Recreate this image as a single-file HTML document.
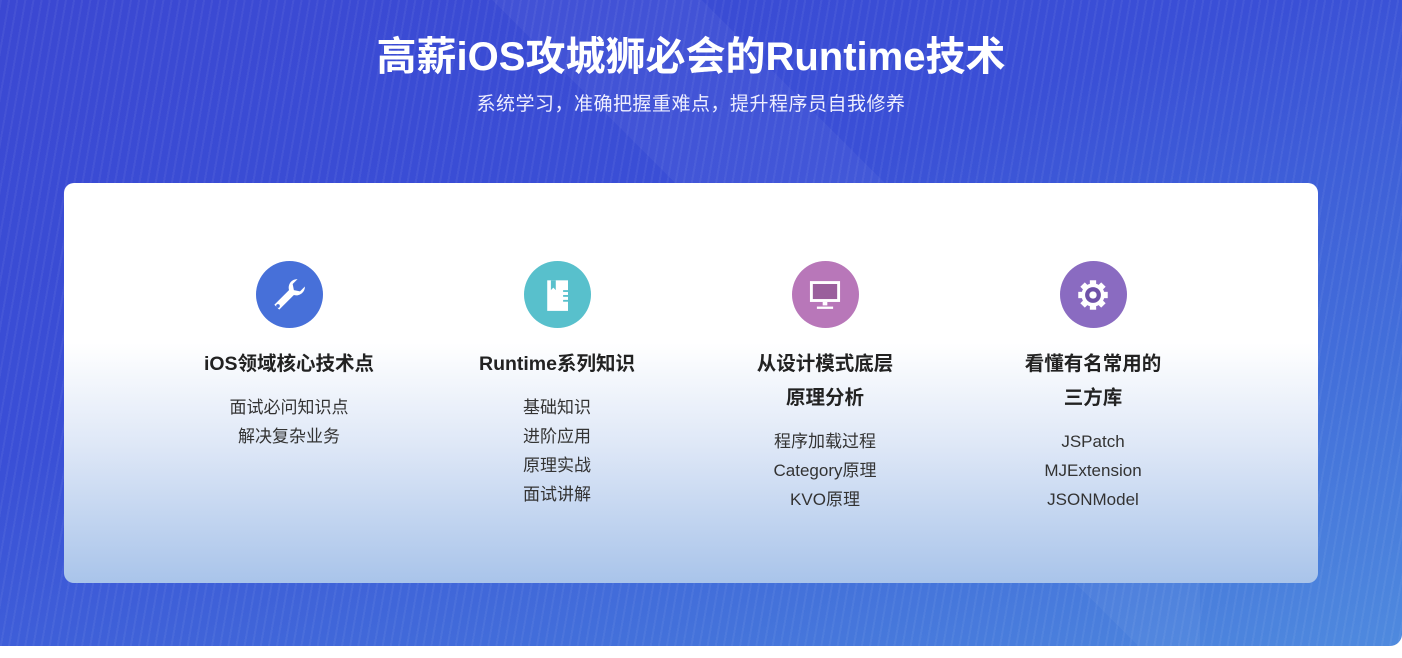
<!DOCTYPE html>
<html><head><meta charset="utf-8"><style>
*{margin:0;padding:0;box-sizing:border-box}
html,body{width:1402px;height:658px;overflow:hidden}
body{background:#fff;font-family:"Liberation Sans","Noto Sans CJK SC",sans-serif;position:relative}
.bg{position:absolute;left:0;top:0;width:1402px;height:646px;border-bottom-right-radius:12px;overflow:hidden;
background:linear-gradient(160deg,#3b48d2 0%,#3a4fd6 40%,#4370da 75%,#4f8ade 100%)}
.stripes{position:absolute;inset:0;background:repeating-linear-gradient(100deg,rgba(255,255,255,0.05) 0 2px,transparent 2px 8px)}
.x1{position:absolute;left:300px;top:-200px;width:900px;height:846px;background:linear-gradient(45deg,transparent 48%,rgba(255,255,255,0.04) 48%,rgba(255,255,255,0.04) 60%,transparent 60%)}
h1{position:absolute;top:34px;left:0;width:1382px;text-align:center;color:#fff;font-size:40px;line-height:46px;font-weight:bold}
.sub{position:absolute;top:92px;left:0;width:1382px;text-align:center;color:#eef;font-size:19px;line-height:26px;letter-spacing:0.5px}
.card{position:absolute;left:64px;top:183px;width:1254px;height:400px;border-radius:10px;
background:linear-gradient(180deg,#fff 0%,#fff 40%,#dfe8f7 65%,#a9c4ea 100%)}
.col{position:absolute;top:78px;width:300px;margin-left:-150px;text-align:center}
.ic{width:67px;height:67px;border-radius:50%;margin:0 auto;display:flex;align-items:center;justify-content:center}
.t{margin-top:19px;font-size:19.5px;font-weight:bold;color:#222;line-height:34px}
.items{margin-top:12px;font-size:17px;color:#333;line-height:29px}
</style></head><body>
<div class="bg"><div class="stripes"></div><div class="x1"></div></div>
<h1>高薪iOS攻城狮必会的Runtime技术</h1>
<div class="sub">系统学习，准确把握重难点，提升程序员自我修养</div>
<div class="card">
 <div class="col" style="left:225px">
  <div class="ic" style="background:#4770d9"><svg width="44" height="44" viewBox="0 0 36 36"><path d="M25 5a7 7 0 0 0-7 9L6 26l4 4 12-12a7 7 0 0 0 9-7l-4 4-5-1-1-5z" fill="#fff"/><circle cx="9" cy="27" r="1.5" fill="#4770d9"/></svg></div>
  <div class="t">iOS领域核心技术点</div>
  <div class="items">面试必问知识点<br>解决复杂业务</div>
 </div>
 <div class="col" style="left:493px">
  <div class="ic" style="background:#58c0cc"><svg width="44" height="44" viewBox="0 0 36 36"><rect x="10" y="6" width="17" height="25" fill="#fff"/><path d="M13 6h4v8l-2-2-2 2z" fill="#58c0cc"/><rect x="23" y="14" width="4" height="1.5" fill="#58c0cc"/><rect x="23" y="18" width="4" height="1.5" fill="#58c0cc"/><rect x="23" y="22" width="4" height="1.5" fill="#58c0cc"/></svg></div>
  <div class="t">Runtime系列知识</div>
  <div class="items">基础知识<br>进阶应用<br>原理实战<br>面试讲解</div>
 </div>
 <div class="col" style="left:761px">
  <div class="ic" style="background:#b877b9"><svg width="44" height="44" viewBox="0 0 38 38"><rect x="6" y="7" width="26" height="18" fill="#fff"/><rect x="8.5" y="9.5" width="21" height="13" fill="#9a5f9c"/><rect x="17" y="25" width="4" height="3" fill="#fff"/><rect x="12" y="29" width="14" height="2" fill="#fff"/></svg></div>
  <div class="t">从设计模式底层<br>原理分析</div>
  <div class="items">程序加载过程<br>Category原理<br>KVO原理</div>
 </div>
 <div class="col" style="left:1029px">
  <div class="ic" style="background:#8a6bc1"><svg width="40" height="40" viewBox="0 0 38 38"><g fill="#fff"><circle cx="19" cy="19" r="11"/><rect x="16" y="5" width="6" height="6"/><rect x="16" y="27" width="6" height="6"/><rect x="5" y="16" width="6" height="6"/><rect x="27" y="16" width="6" height="6"/><rect x="16" y="5" width="6" height="6" transform="rotate(45 19 19)"/><rect x="16" y="27" width="6" height="6" transform="rotate(45 19 19)"/><rect x="5" y="16" width="6" height="6" transform="rotate(45 19 19)"/><rect x="27" y="16" width="6" height="6" transform="rotate(45 19 19)"/></g><circle cx="19" cy="19" r="7.5" fill="#6f52a8"/><circle cx="19" cy="19" r="3.5" fill="#fff"/></svg></div>
  <div class="t">看懂有名常用的<br>三方库</div>
  <div class="items">JSPatch<br>MJExtension<br>JSONModel</div>
 </div>
</div>
</body></html>
